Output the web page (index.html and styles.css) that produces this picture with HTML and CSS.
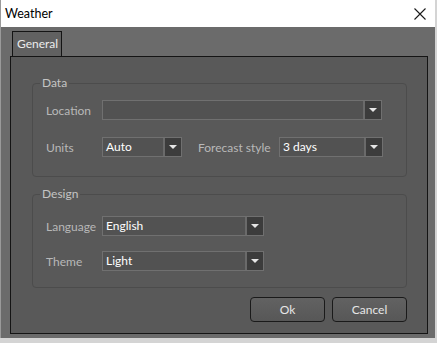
FILE: index.html
```html
<!DOCTYPE html>
<html lang="en">
<head>
  <meta charset="UTF-8">
  <title>Weather</title>
  <link rel="stylesheet" href="styles.css">
</head>
<body>
  <div class="window">
    <div class="titlebar">
      <span class="title">Weather</span>
      <svg class="close" width="12" height="12" viewBox="0 0 12 12">
        <path d="M0.5 0.5 L11.5 11.5 M11.5 0.5 L0.5 11.5" stroke="#1a1a1a" stroke-width="1.1" fill="none"/>
      </svg>
    </div>
    <div class="client">
      <div class="tabs">
        <div class="tab active">General</div>
      </div>
      <div class="panel">
        <!-- Data group -->
        <fieldset class="group group-data">
          <legend>Data</legend>
          <div class="row">
            <label class="label">Location</label>
            <div class="combo combo-wide"><span class="value"></span><span class="arrow"></span></div>
          </div>
          <div class="row">
            <label class="label">Units</label>
            <div class="combo combo-units"><span class="value">Auto</span><span class="arrow"></span></div>
            <label class="label label-forecast">Forecast style</label>
            <div class="combo combo-forecast"><span class="value">3 days</span><span class="arrow"></span></div>
          </div>
        </fieldset>
        <!-- Design group -->
        <fieldset class="group group-design">
          <legend>Design</legend>
          <div class="row">
            <label class="label">Language</label>
            <div class="combo combo-mid"><span class="value">English</span><span class="arrow"></span></div>
          </div>
          <div class="row">
            <label class="label">Theme</label>
            <div class="combo combo-mid"><span class="value">Light</span><span class="arrow"></span></div>
          </div>
        </fieldset>
        <div class="buttons">
          <button class="btn">Ok</button>
          <button class="btn">Cancel</button>
        </div>
      </div>
    </div>
  </div>
</body>
</html>
```

FILE: styles.css
```css
/* Global */
body {
  margin: 0;
  padding: 0;
  background: #d4d4d4;
  font-family: Lato, "Noto Sans", sans-serif;
  font-size: 12px;
}
.window {
  width: 434px;
  height: 338px;
  border-left: 1px solid #9a9a9a;
  background: #6b6b6b;
  display: flex;
  flex-direction: column;
}
/* Title bar */
.titlebar {
  height: 27px;
  background: #ffffff;
  display: flex;
  align-items: center;
  justify-content: space-between;
  padding: 0 9px 0 4px;
}
.title {
  color: #000;
  font-size: 12.5px;
}
.close {
  display: block;
}
/* Client area */
.client {
  flex: 1;
  padding: 4px 7px 0 9px;
}
.tabs {
  display: flex;
  padding-left: 2px;
  position: relative;
  z-index: 1;
}
.tab {
  height: 24px;
  line-height: 24px;
  padding: 0 4px;
  width: 40px;
  background: #616161;
  border: 1px solid #141414;
  border-bottom: none;
  color: #ececec;
}
.panel {
  height: 257px;
  background: #595959;
  border: 1px solid #141414;
  padding: 19px 20px 0 21px;
}
/* Group boxes */
.group {
  margin: 0;
  border: 1px solid #4c4c4c;
  border-radius: 4px;
  padding: 0 0 0 13px;
  min-width: 0;
}
.group legend {
  padding: 0 2px;
  margin-left: -6px;
  line-height: 14px;
  color: #c4c4c4;
}
.group-data {
  padding-top: 10px;
  padding-bottom: 19px;
}
.group-design {
  margin-top: 10px;
  padding-top: 15px;
  padding-bottom: 16px;
}
.row {
  display: flex;
  align-items: center;
}
.group-data .row + .row {
  margin-top: 17px;
}
.group-design .row + .row {
  margin-top: 15px;
}
.label {
  width: 56px;
  color: #b8b8b8;
}
.label-forecast {
  width: 81px;
  margin-left: 16px;
}
/* Combo boxes */
.combo {
  height: 20px;
  box-sizing: border-box;
  border: 1px solid #707070;
  background: #525252;
  display: flex;
  align-items: stretch;
}
.combo .value {
  flex: 1;
  color: #ffffff;
  line-height: 18px;
  padding-left: 3px;
  border-right: 2px solid #6a6a6a;
}
.combo .arrow {
  width: 16px;
  background: #3c3c3c;
  position: relative;
}
.combo .arrow::after {
  content: "";
  position: absolute;
  left: 4px;
  top: 7px;
  border-left: 4px solid transparent;
  border-right: 4px solid transparent;
  border-top: 4px solid #e6e6e6;
}
.combo-wide { width: 280px; }
.combo-units { width: 80px; }
.combo-forecast { width: 104px; }
.combo-mid { width: 162px; }
/* Buttons */
.buttons {
  display: flex;
  justify-content: flex-end;
  gap: 7px;
  margin-top: 9px;
}
.btn {
  width: 75px;
  height: 25px;
  border: 1px solid #1a1a1a;
  border-radius: 4px;
  background: linear-gradient(#626262, #575757);
  color: #e6e6e6;
  font-family: inherit;
  font-size: 12px;
  padding: 0;
}
```
